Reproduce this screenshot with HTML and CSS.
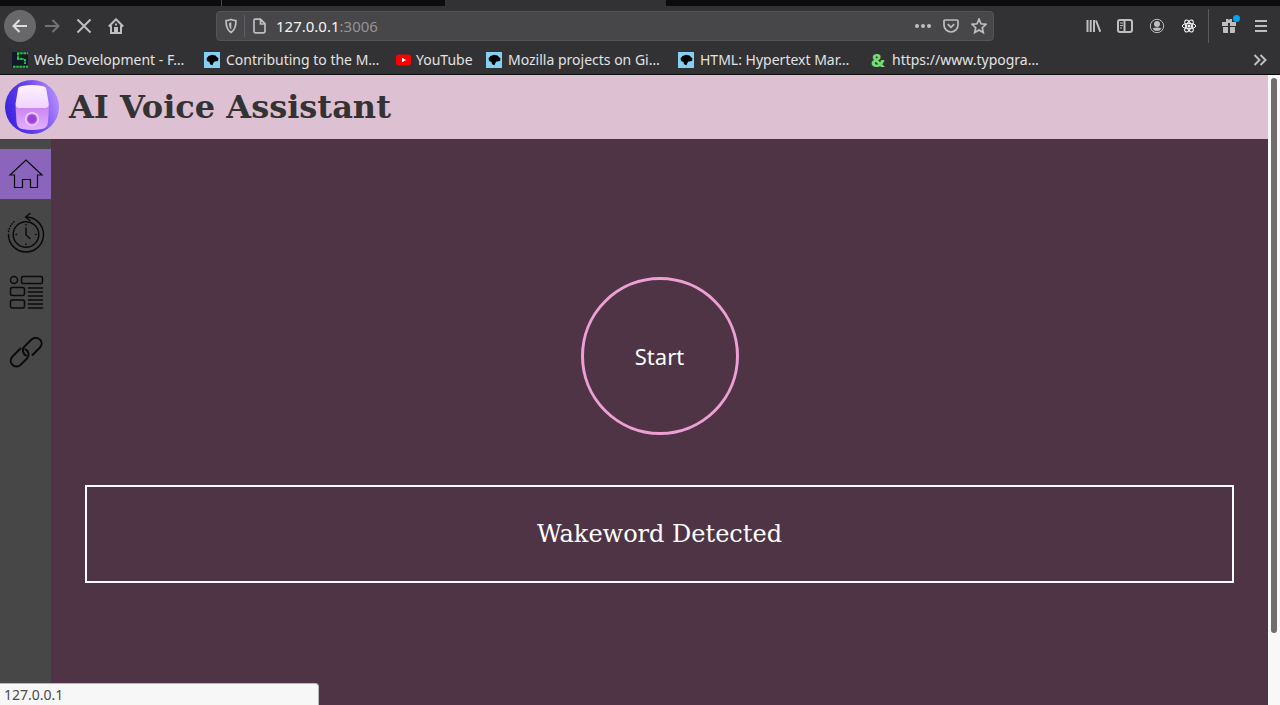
FILE: index.html
```html
<!DOCTYPE html>
<html lang="en">
<head>
<meta charset="utf-8">
<title>AI Voice Assistant</title>
<link rel="stylesheet" href="styles.css">
</head>
<body>
<svg class="defs" aria-hidden="true">
  <symbol id="mdn" viewBox="0 0 16 16"><path fill="#83d0f2" d="M0 0h16v16H0z"/><path fill="#000" d="M2.500 6.500 4.500 4 8 2.700l3.500.8 3 3-.5 2.500-3.500.5-1.200 1.500-.8 2.300-2.500-1-.5-2.300-2-.8L3 8.500z"/></symbol>
</svg>
<div class="tabs"><span class="tab-first"></span><span class="tab"></span><span class="tab-active"></span></div>
<nav class="toolbar" aria-label="Browser">
  <button class="tool back" aria-label="Back"><svg width="16" height="16" viewBox="0 0 16 16"><path d="M15 8H1.500M7.500 2 1.500 8l6 6"/></svg></button>
  <button class="tool dim" aria-label="Forward"><svg width="16" height="16" viewBox="0 0 16 16"><path d="M1 8h13.500M8.500 2l6 6-6 6"/></svg></button>
  <button class="tool" aria-label="Stop"><svg width="16" height="16" viewBox="0 0 16 16"><path d="m1.500 1.500 13 13M14.500 1.500l-13 13"/></svg></button>
  <button class="tool" aria-label="Home"><svg width="16" height="16" viewBox="0 0 16 16"><path d="M.8 8.500 8 1.300l7.200 7.200M3 7.500V15h10V7.500"/><path class="solid" d="M6 9h4v5H6zM7 5.500h2v2H7z"/></svg></button>
  <div class="address">
    <button class="mini shield" aria-label="Tracking protection"><svg width="14" height="16" viewBox="0 0 14 16"><path d="M7 1.500c2 .8 3.500 1.100 5 1.200 0 5.500-.7 9-5 11.800C2.700 11.700 2 8.200 2 2.700c1.500-.1 3-.4 5-1.200z"/><path class="solid" d="M7.300 4.300v7.400C5.500 10 5 8 5 4.900z"/></svg></button>
    <button class="mini site" aria-label="Site information"><svg width="16" height="16" viewBox="0 0 16 16"><path d="M3.500 1.200H9.500l4.500 4.500v7.600a1.500 1.500 0 0 1-1.500 1.500h-8a1.500 1.500 0 0 1-1.500-1.500V2.200a1 1 0 0 1 1-1zM9.500 1.500V6H14"/></svg></button>
    <div class="url" role="textbox" aria-label="Address" contenteditable="true" spellcheck="false">127.0.0.1<span class="port">:3006</span></div>
    <button class="mini" aria-label="Page actions"><svg width="18" height="16" viewBox="0 0 18 16"><g class="solid"><circle cx="3" cy="8" r="2"/><circle cx="9" cy="8" r="2"/><circle cx="15" cy="8" r="2"/></g></svg></button>
    <button class="mini" aria-label="Save to Pocket"><svg width="16" height="16" viewBox="0 0 16 16"><path d="M2 2h12q1 0 1 1v4a7 7 0 0 1-14 0V3q0-1 1-1zM4.800 6.200 8 9.300l3.200-3.100"/></svg></button>
    <button class="mini" aria-label="Bookmark"><svg width="16" height="16" viewBox="0 0 16 16"><path d="m8 1.200 2 4.600 5 .5-3.700 3.400 1 4.900L8 12.100l-4.300 2.500 1-4.900L1 6.300l5-.5z"/></svg></button>
  </div>
  <div class="tools">
    <button class="tool" aria-label="Library"><svg width="16" height="16" viewBox="0 0 16 16"><path d="M2.500 2v12M5.700 2v12M9 2v12M11 2.500l4.300 11.300"/></svg></button>
    <button class="tool" aria-label="Sidebar"><svg width="16" height="16" viewBox="0 0 16 16"><rect x="1" y="2" width="14" height="12" rx="2"/><path d="M7.500 2v12"/><path class="thin" d="M3 5h3M3 7.500h3M3 10h2"/></svg></button>
    <button class="tool" aria-label="Account"><svg width="16" height="16" viewBox="0 0 16 16"><circle class="thin" cx="8" cy="8" r="6.700"/><g class="solid"><circle cx="8" cy="6" r="3"/><path d="M3.500 10.500q4.500-2 9 0Q11 13 8 13t-4.500-2.500z"/></g></svg></button>
    <button class="tool atom" aria-label="React tools"><svg width="16" height="16" viewBox="0 0 16 16"><g class="thin"><ellipse cx="8" cy="8" rx="6.700" ry="2.700"/><ellipse cx="8" cy="8" rx="6.700" ry="2.700" transform="rotate(60 8 8)"/><ellipse cx="8" cy="8" rx="6.700" ry="2.700" transform="rotate(120 8 8)"/></g><circle class="solid" cx="8" cy="8" r="1.500"/></svg></button>
    <span class="divider"></span>
    <button class="tool gift" aria-label="What's new"><svg width="16" height="16" viewBox="0 0 16 16"><path class="solid" d="M1 4h4V1h2l1 1 1-1h2v3h4v4H9V5H7v3H1zM2 9h5v6H3q-1 0-1-1zM9 9h5v5q0 1-1 1H9z"/></svg><span class="dot"></span></button>
    <button class="tool" aria-label="Menu"><svg width="16" height="16" viewBox="0 0 16 16"><path d="M2 3h12M2 8h12M2 13h12"/></svg></button>
  </div>
</nav>
<nav class="bookmarks" aria-label="Bookmarks">
  <a href="#" class="mark"><svg width="16" height="16" viewBox="0 0 16 16"><path fill="#111827" d="M0 0h16v16H0z"/><path stroke="#24c444" stroke-width="2" stroke-dasharray="2.600 .6" d="M5 1.200h11M6 1v6M5 7h7M13 7v5"/><path stroke="#24c444" stroke-width="2" stroke-dasharray="2.600 .6" d="M1 14.800h15"/></svg><span>Web Development - F…</span></a>
  <a href="#" class="mark"><svg width="16" height="16"><use href="#mdn"/></svg><span>Contributing to the M…</span></a>
  <a href="#" class="mark short"><svg width="16" height="16" viewBox="0 0 16 16"><rect x="0" y="2.500" width="15" height="11" rx="3" fill="#f00"/><path fill="#fff" d="m6 5.800 4 2.200-4 2.200z"/></svg><span>YouTube</span></a>
  <a href="#" class="mark"><svg width="16" height="16"><use href="#mdn"/></svg><span>Mozilla projects on Gi…</span></a>
  <a href="#" class="mark"><svg width="16" height="16"><use href="#mdn"/></svg><span>HTML: Hypertext Mar…</span></a>
  <a href="#" class="mark"><span class="amp">&amp;</span><span>https://www.typogra…</span></a>
  <button class="more" aria-label="More bookmarks"><svg width="16" height="16" viewBox="0 0 16 16"><path d="m2.500 3 5 5-5 5M8.500 3l5 5-5 5"/></svg></button>
</nav>
<div class="viewport">
  <div class="page">
    <header class="header">
      <svg class="logo" viewBox="0 0 54 54" role="img" aria-label="Smart speaker">
        <defs>
          <linearGradient id="disc" x1="0" x2="1" y1=".65" y2=".35"><stop offset="0" stop-color="#3a22dc"/><stop offset=".5" stop-color="#6444ee"/><stop offset="1" stop-color="#b78cff"/></linearGradient>
          <linearGradient id="base" x1="0" x2="0" y1="0" y2="1"><stop offset="0" stop-color="#c982ee"/><stop offset="1" stop-color="#e3b0ff"/></linearGradient>
          <linearGradient id="top" x1="0" x2="0" y1="0" y2="1"><stop offset="0" stop-color="#fff2ff"/><stop offset="1" stop-color="#efd2ff"/></linearGradient>
        </defs>
        <circle cx="27" cy="27" r="27" fill="url(#disc)"/>
        <path fill="url(#base)" d="M10.500 26h33.500l-1 16q-.5 6-6 7-10 2-20 0-5-1-5.500-7z"/>
        <path fill="url(#top)" d="M13 9q.3-2.500 4-3 10-2 20 0 4 .5 4.300 3l2.500 15q.2 4-4 4H14.500q-4.200 0-4-4z"/>
        <circle cx="27" cy="39" r="6.300" fill="#bd78ec" stroke="#efd0ff" stroke-width="1.600"/><circle cx="27" cy="39" r="4.300" fill="#9b45d5"/>
      </svg>
      <h1 class="title">AI Voice Assistant</h1>
    </header>
    <div class="content">
      <nav class="sidebar" aria-label="Sections">
        <a href="#" class="item current" aria-label="Home"><svg width="36" height="36" viewBox="0 0 36 36"><path class="fine" d="M2 19 18 4l16 15h-4.500v12.500h-7v-8h-8v8h-8V19z"/></svg></a>
        <a href="#" class="item" aria-label="History"><svg width="40" height="40" viewBox="0 0 40 40"><path d="M20 4a17.500 17.500 0 1 1-17.500 17.500M24 .5 19.500 4l4.500 3.500"/><path stroke-dasharray=".5 2.200" d="M2.500 18.500A17.500 17.500 0 0 1 9.500 7.500"/><circle cx="20" cy="21.500" r="12.800"/><path d="M20 15v7l4 3.500M20 11.500v.5M20 31v.5M10 21.500h.5M29.500 21.500h.5"/></svg></a>
        <a href="#" class="item" aria-label="Features"><svg width="36" height="36" viewBox="0 0 36 36"><circle cx="6" cy="6" r="3.500"/><rect x="13.500" y="2.500" width="21" height="7" rx="1.500"/><rect x="2.500" y="13.500" width="14" height="8" rx="2"/><rect x="2.500" y="26" width="14" height="8" rx="2"/><path d="M20.500 14h14M20.500 18h14M20.500 22h14M20.500 26h14M20.500 30h14M20.500 34h14"/></svg></a>
        <a href="#" class="item" aria-label="Links"><svg width="36" height="36" viewBox="0 0 36 36"><path class="bold" d="m12.500 15.500-8 8c-5.500 6 2.500 13 8 8.500l6.500-6.500c3-3.500 1.500-7.500-1.500-9M24.500 22l7-7c6-6-2-13.500-8-8.500L16.500 13.500c-3 3-1.500 7.500 1.500 9"/></svg></a>
      </nav>
      <main class="main">
        <button class="start">Start</button>
        <div class="result" role="status">Wakeword Detected</div>
      </main>
    </div>
  </div>
  <div class="scroll"><div class="thumb"></div></div>
</div>
<div class="hint">127.0.0.1</div>
</body>
</html>
```
FILE: styles.css
```css
* { box-sizing: border-box; }
body {
  margin: 0;
  height: 100vh;
  display: flex;
  flex-direction: column;
  overflow: hidden;
  background: #323234;
  font-family: "Noto Sans", "Open Sans", sans-serif;
}
button { margin: 0; padding: 0; border: 0; background: none; color: inherit; font: inherit; }
a { color: inherit; text-decoration: none; }
svg { display: block; flex: none; fill: none; stroke: none; }
.defs { position: absolute; width: 0; height: 0; }

.tabs { display: flex; height: 6px; background: #0c0c0d; }
.tab-first { width: 222px; border-right: 1px solid #4a4a4c; }
.tab { width: 223px; }
.tab-active { width: 221px; background: #323234; }

.toolbar { display: flex; align-items: center; height: 40px; padding-left: 4px; color: #bebebf; }
.toolbar svg, .more svg { stroke: currentColor; stroke-width: 2; }
.toolbar .solid { fill: currentColor; stroke: none; }
.toolbar .thin { stroke-width: 1; }
.tool { display: grid; place-items: center; width: 32px; height: 32px; }
.back { border-radius: 50%; background: #68686a; color: #dededf; }
.dim { color: #737375; }
.atom { color: #fff; }
.address {
  display: flex;
  align-items: center;
  flex: 1;
  height: 30px;
  margin-left: 84px;
  border: 1px solid #545456;
  border-radius: 4px;
  background: #474749;
}
.mini { display: grid; place-items: center; width: 28px; height: 28px; }
.mini svg { stroke-width: 1.700; }
.shield { border-right: 1px solid #5b5e65; height: 22px; }
.url { flex: 1; padding-left: 3px; color: #f5f5f5; font-size: 15px; line-height: 20px; outline: 0; }
.port { color: #939395; }
.tools { display: flex; align-items: center; justify-content: flex-end; width: 286px; padding-right: 3px; }
.divider { width: 1px; height: 34px; margin: 0 4px 0 3px; background: #5a5a5c; }
.gift { position: relative; }
.dot { position: absolute; top: 5px; right: 5px; width: 7px; height: 7px; border-radius: 50%; background: #00a4ed; }

.bookmarks {
  display: flex;
  align-items: center;
  height: 29px;
  padding: 0 12px;
  border-bottom: 1px solid #0c0c0d;
  color: #e2e2e3;
  font-size: 14px;
  line-height: 20px;
}
.mark { display: flex; align-items: center; gap: 6px; width: 192px; white-space: nowrap; }
.short { width: 90px; gap: 4px; }
.amp { width: 16px; color: #70df70; font-size: 18px; font-weight: 800; text-align: center; }
.more { margin-left: auto; color: #bebebf; }

.viewport { display: flex; flex: 1; min-height: 0; }
.page { display: flex; flex: 1; flex-direction: column; min-width: 0; }
.header { display: flex; align-items: center; gap: 10px; height: 64px; padding: 0 5px; background: #dec0d3; }
.logo { width: 54px; height: 54px; }
.title { margin: 0; color: #333; font: bold 32px/40px "DejaVu Serif", serif; }
.content { display: flex; flex: 1; min-height: 0; }
.sidebar { display: flex; flex-direction: column; gap: 9px; width: 51px; padding-top: 10px; background: #474747; }
.item { display: grid; place-items: center; height: 50px; }
.item svg { stroke: #0b0b0b; stroke-width: 1.500; stroke-linecap: round; stroke-linejoin: round; }
.item .fine { stroke-width: 1.200; stroke-linejoin: miter; }
.item .bold { stroke-width: 2; }
.current { background: #8b64bc; }
.main {
  display: flex;
  flex: 1;
  flex-direction: column;
  align-items: center;
  gap: 50px;
  padding: 138px 34px 0;
  background: #4f3446;
  color: #fff;
}
.start { width: 158px; height: 158px; border: 3px solid #ee9fd4; border-radius: 50%; font-size: 22px; line-height: 28px; }
.result {
  width: 100%;
  padding: 32px;
  border: 2px solid #fff;
  font: 24px/30px "DejaVu Serif", serif;
  text-align: center;
}
.scroll { width: 12px; padding: 3px; background: #f8f8f8; }
.thumb { height: 89%; border-radius: 3px; background: #6e6e6e; }
.hint {
  position: absolute;
  bottom: 0;
  left: 0;
  width: 319px;
  padding: 1px 4px 0;
  border: solid #b8b8b8;
  border-width: 1px 1px 0 0;
  border-radius: 0 4px 0 0;
  background: #f7f7f7;
  color: #4a4a4a;
  font-size: 14px;
  line-height: 20px;
}
```
